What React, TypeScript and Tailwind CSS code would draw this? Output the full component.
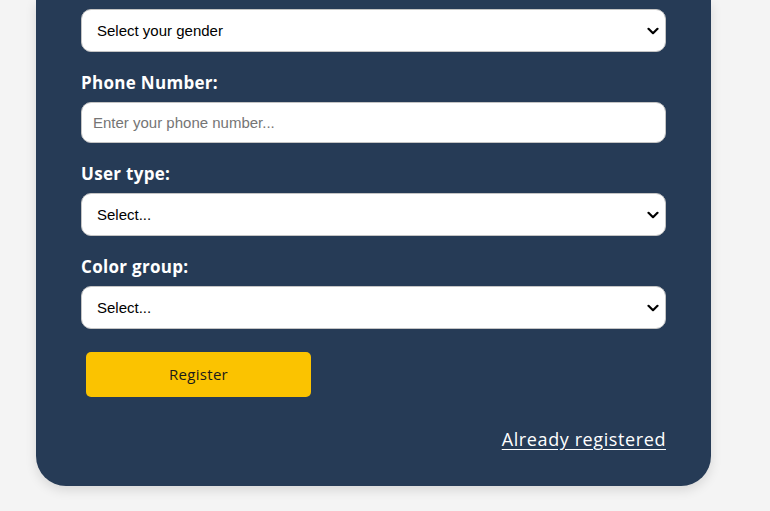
import React from "react";

const Chevron = () => (
  <svg
    className="pointer-events-none absolute right-[7px] top-1/2 -translate-y-1/2"
    width="12"
    height="8"
    viewBox="0 0 12 8"
    fill="none"
  >
    <path d="M1.5 1.8 L6 6.2 L10.5 1.8" stroke="#000" strokeWidth="2.2" strokeLinecap="round" strokeLinejoin="round" />
  </svg>
);

const SelectBox = ({ text }: { text: string }) => (
  <div className="relative">
    <select
      className="block h-[43px] w-full appearance-none rounded-[10px] border border-[#c4c4c4] bg-white pl-[15px] pt-px font-['Liberation_Sans',Arial,sans-serif] text-[15px] text-black outline-none"
      defaultValue=""
    >
      <option value="">{text}</option>
    </select>
    <Chevron />
  </div>
);

const Label = ({ children }: { children: React.ReactNode }) => (
  <label className="mt-[18px] mb-[7px] block font-['Open_Sans',sans-serif] text-[17px] leading-[25px] font-bold tracking-[0.3px] text-white">
    {children}
  </label>
);

export default function App() {
  return (
    <div className="min-h-[511px] w-[770px] bg-[#f4f4f4] px-[36px] pb-[25px]">
      <div className="flex w-[675px] flex-col rounded-b-[30px] bg-[#263b56] pt-[9px] pr-[45px] pb-[34px] pl-[45px] shadow-[0_4px_12px_rgba(0,0,0,0.12)]">
        <SelectBox text="Select your gender" />
        <Label>Phone Number:</Label>
        <input
          className="block h-[41px] w-full rounded-[10px] border border-[#c4c4c4] bg-white px-[11px] font-['Liberation_Sans',Arial,sans-serif] text-[15px] text-black outline-none placeholder:text-[#757575]"
          placeholder="Enter your phone number..."
        />
        <Label>User type:</Label>
        <SelectBox text="Select..." />
        <Label>Color group:</Label>
        <SelectBox text="Select..." />
        <button className="mt-[23px] ml-[5px] flex h-[45px] w-[225px] items-center justify-center rounded-[5px] bg-[#fbc300] font-['Open_Sans',sans-serif] text-[15px] tracking-[0.3px] text-[#1a1a1a]">
          Register
        </button>
        <div className="mt-[30px] flex justify-end">
          <a
            href="#"
            className="font-['Open_Sans',sans-serif] text-[18px] leading-[25px] font-medium tracking-[0.6px] text-white underline underline-offset-[3px]"
          >
            Already registered
          </a>
        </div>
      </div>
    </div>
  );
}
